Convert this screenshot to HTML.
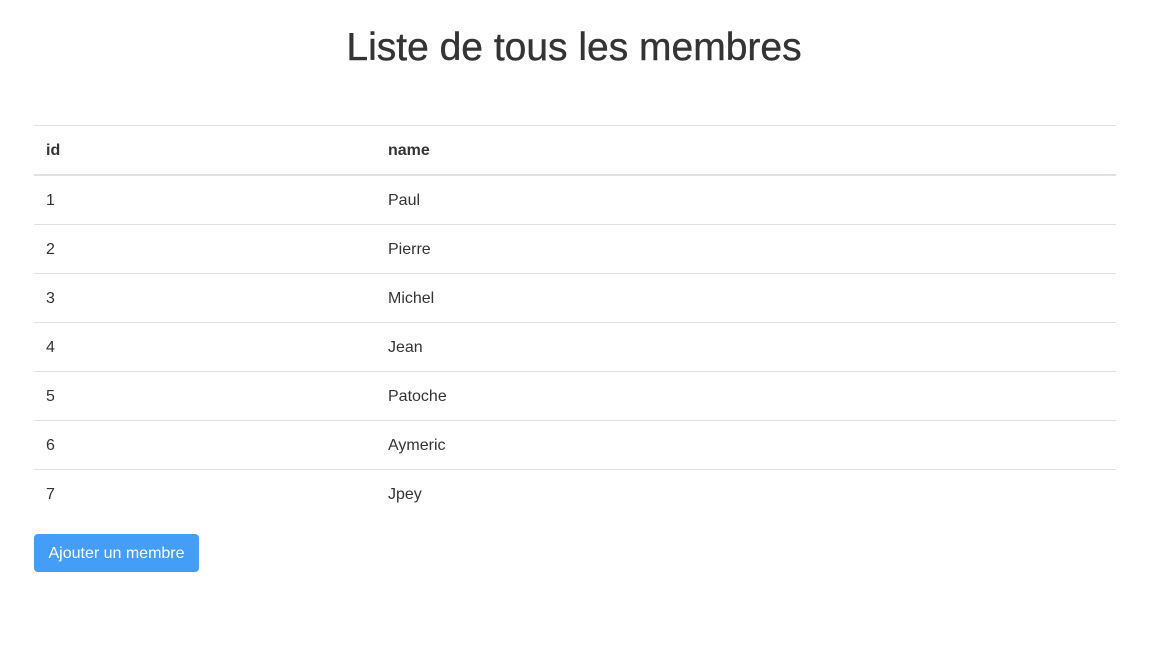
<!DOCTYPE html>
<html><head><style>
body{margin:0;width:1158px;height:650px;background:#fff;font-family:"Liberation Sans",sans-serif;color:#343a40;position:relative;overflow:hidden}
h1{position:absolute;left:0;width:1148px;top:23px;margin:0;text-align:center;font-size:39px;font-weight:normal;line-height:50px;color:#343434;-webkit-text-stroke:0.4px #343434}
.line{position:absolute;left:34px;width:1082px;height:1px;background:#dee2e6}
.t{position:absolute;font-size:16px;line-height:20px;color:#333}
.b{font-weight:bold}
.btn{position:absolute;left:34px;top:534px;width:165px;height:38px;background:#449df6;border-radius:4px;color:#fff;font-size:16px;line-height:39px;text-align:center}
</style></head><body>
<h1>Liste de tous les membres</h1>
<div class="line" style="top:125px"></div>
<div class="line" style="top:174px;height:2px"></div>
<div class="line" style="top:224px"></div>
<div class="line" style="top:273px"></div>
<div class="line" style="top:322px"></div>
<div class="line" style="top:371px"></div>
<div class="line" style="top:420px"></div>
<div class="line" style="top:469px"></div>
<div class="t b" style="left:46px;top:141px">id</div><div class="t b" style="left:388px;top:141px">name</div>
<div class="t" style="left:46px;top:191px">1</div><div class="t" style="left:388px;top:191px">Paul</div>
<div class="t" style="left:46px;top:240px">2</div><div class="t" style="left:388px;top:240px">Pierre</div>
<div class="t" style="left:46px;top:289px">3</div><div class="t" style="left:388px;top:289px">Michel</div>
<div class="t" style="left:46px;top:338px">4</div><div class="t" style="left:388px;top:338px">Jean</div>
<div class="t" style="left:46px;top:387px">5</div><div class="t" style="left:388px;top:387px">Patoche</div>
<div class="t" style="left:46px;top:436px">6</div><div class="t" style="left:388px;top:436px">Aymeric</div>
<div class="t" style="left:46px;top:485px">7</div><div class="t" style="left:388px;top:485px">Jpey</div>
<div class="btn">Ajouter un membre</div>
</body></html>
